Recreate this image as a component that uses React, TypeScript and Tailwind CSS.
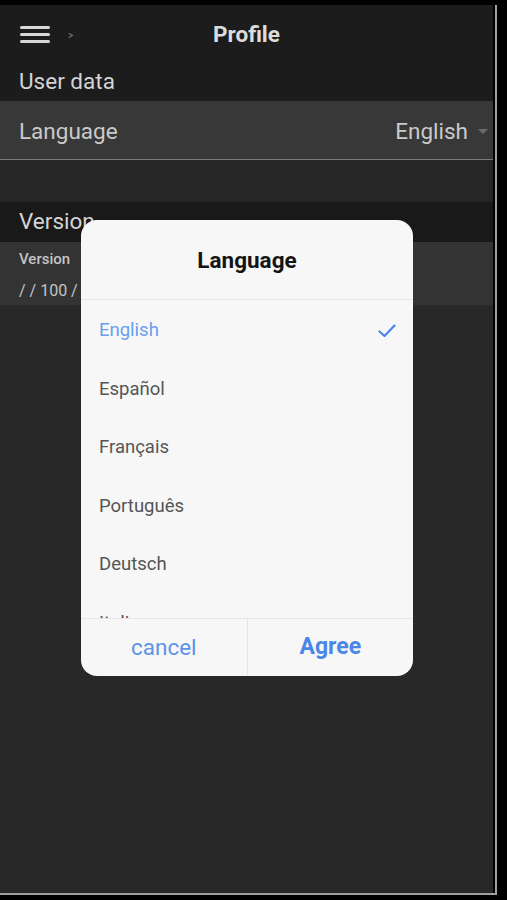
import React from "react";

const langs = ["English", "Español", "Français", "Português", "Deutsch", "Italiano"];

export default function App() {
  return (
    <div
      className="w-[507px] h-[900px] bg-black relative overflow-hidden"
      style={{ fontFamily: "Roboto, 'Noto Sans', sans-serif" }}
    >
      <div className="pt-[5px]">
        <div className="w-[497px] h-[890px] border-r-[2px] border-b-[2px] border-[#a0a0a0] pr-[2px] bg-black">
          <div className="w-[493px] h-[888px] bg-[#282828] flex flex-col">
            {/* header */}
            <div className="h-[58px] bg-[#1c1c1c] flex items-center relative">
              <div className="ml-[20px] flex flex-col gap-[4px]">
                <div className="w-[30px] h-[3px] bg-[#d8d8d8] rounded-sm" />
                <div className="w-[30px] h-[3px] bg-[#d8d8d8] rounded-sm" />
                <div className="w-[30px] h-[3px] bg-[#d8d8d8] rounded-sm" />
              </div>
              <span className="ml-[18px] text-[10px] text-[#888] mt-[2px]">&gt;</span>
              <div className="absolute left-0 right-0 top-[15px] text-center text-[22.5px] leading-[28px] font-bold text-[#dcdcdc] pointer-events-none">
                Profile
              </div>
            </div>
            {/* user data */}
            <div className="h-[38px] bg-[#1c1c1c] flex items-center px-[19px] text-[22.5px] text-[#d4d4d4]">
              User data
            </div>
            {/* language row */}
            <div className="h-[59px] bg-[#383838] border-b border-[#7a7a7a] flex items-center pt-[3px] pl-[19px] pr-[4px] text-[22.5px] text-[#cacaca]">
              <span className="flex-1">Language</span>
              <span>English</span>
              <svg width="12" height="8" viewBox="0 0 12 8" className="ml-[9px]">
                <path d="M1 1 L11 1 L6 6 Z" fill="#6a6a6a" />
              </svg>
            </div>
            <div className="h-[42px] bg-[#262626]" />
            {/* version header */}
            <div className="h-[40px] bg-[#191919] flex items-center px-[19px] text-[22.5px] text-[#d4d4d4]">
              Version
            </div>
            {/* version row */}
            <div className="h-[63px] bg-[#333333] px-[19px] pt-[4px] flex flex-col justify-center gap-[16px] text-[#c4c4c4]">
              <span className="text-[15px] font-medium leading-none">Version</span>
              <span className="text-[16px] leading-none">/ / 100 /</span>
            </div>
            <div className="flex-1 bg-[#282828]" />
          </div>
        </div>
      </div>

      {/* dialog */}
      <div className="absolute left-[81px] top-[220px] w-[332px] h-[456px] bg-[#f7f7f7] rounded-[16px] flex flex-col overflow-hidden">
        <div className="h-[80px] pt-[3px] flex items-center justify-center text-[22.5px] font-bold text-[#141414] border-b border-[#e4e4e4]">
          Language
        </div>
        <div className="h-[318px] pt-[2px] overflow-hidden">
          {langs.map((l, i) => (
            <div key={l} className="h-[58.5px] shrink-0 flex items-center pl-[18px] pr-[17px]">
              <span className={"flex-1 text-[18.5px] " + (i === 0 ? "text-[#6a9ff0]" : "text-[#555555]")}>{l}</span>
              {i === 0 && (
                <svg width="18" height="14" viewBox="0 0 18 14">
                  <path d="M1.5 7.5 L6.5 12 L16.5 1.5" fill="none" stroke="#4a86e8" strokeWidth="2.2" strokeLinecap="round" strokeLinejoin="round" />
                </svg>
              )}
            </div>
          ))}
        </div>
        <div className="flex-1 flex border-t border-[#e6e6e6]">
          <div className="flex-1 flex items-center justify-center text-[22.5px] text-[#5b94e8] border-r border-[#e6e6e6]">
            cancel
          </div>
          <div className="flex-1 flex items-center justify-center text-[23px] font-bold text-[#4a86e8]">
            Agree
          </div>
        </div>
      </div>
    </div>
  );
}
